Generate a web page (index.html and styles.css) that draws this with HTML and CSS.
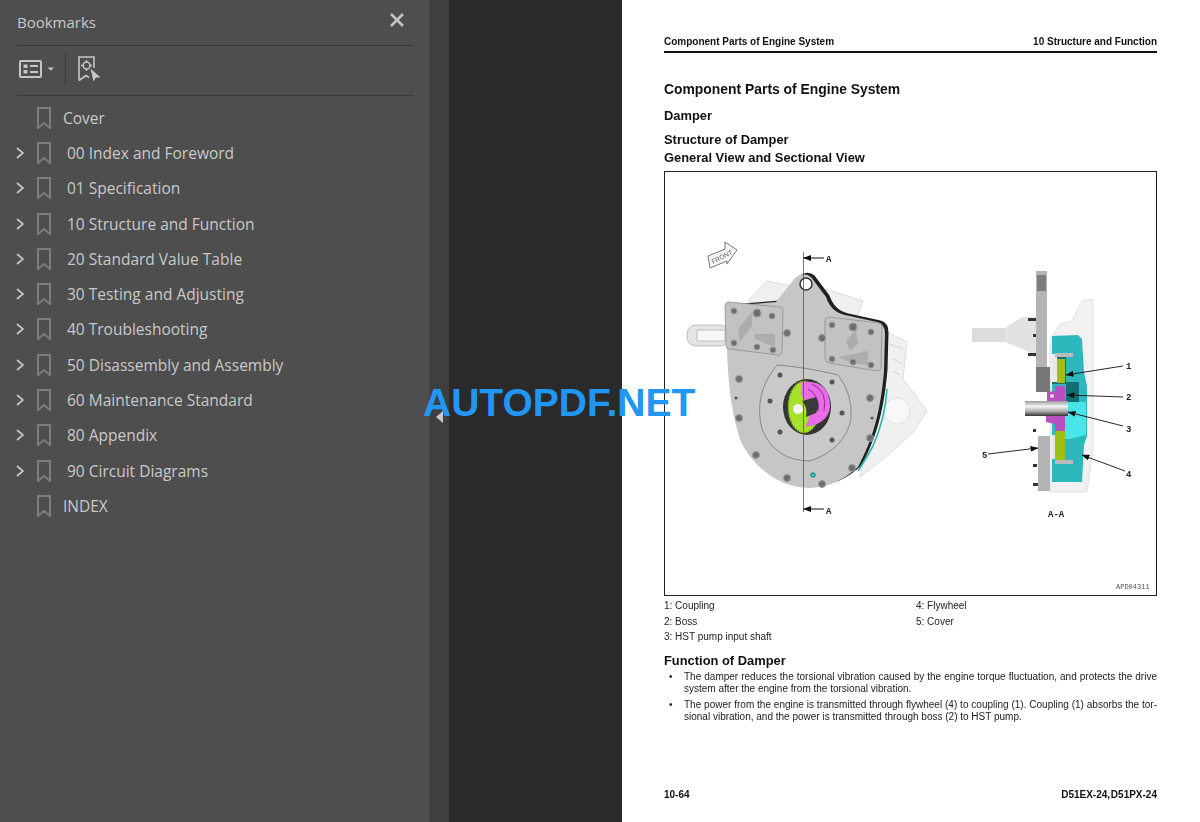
FILE: index.html
```html
<!DOCTYPE html>
<html lang="en">
<head>
  <meta charset="UTF-8" />
  <title>Bookmarks - D51EX-24, D51PX-24</title>
  <link rel="stylesheet" href="styles.css">
</head>
<body>

  <svg class="defs" width="0" height="0" aria-hidden="true">
    <symbol id="bm" viewBox="0 0 14 22">
      <path d="M1 1H13V21L7 16L1 21Z" fill="none" stroke="currentColor" stroke-width="2"/>
    </symbol>
    <symbol id="chev" viewBox="0 0 8 12">
      <path d="M1 1L7 6L1 11" fill="none" stroke="currentColor" stroke-width="1.8"/>
    </symbol>
    <marker id="tip" viewBox="0 0 8 6" refX="0.5" refY="3" markerWidth="8" markerHeight="6" markerUnits="userSpaceOnUse" orient="auto">
      <path d="M8 0L0 3L8 6Z" fill="#111"/>
    </marker>
    <linearGradient id="shaft" x1="0" y1="0" x2="0" y2="1">
      <stop offset="0" stop-color="#999"/>
      <stop offset=".35" stop-color="#f4f4f4"/>
      <stop offset=".7" stop-color="#aaa"/>
      <stop offset="1" stop-color="#333"/>
    </linearGradient>
  </svg>

  <aside class="sidebar">
    <div class="side-head">
      <span class="side-title">Bookmarks</span>
      <svg class="close" width="14" height="14" viewBox="0 0 14 14">
        <path d="M1 1L13 13M13 1L1 13" stroke="currentColor" stroke-width="2.6"/>
      </svg>
    </div>
    <div class="side-tools">
      <svg class="tool-list" width="36" height="18" viewBox="0 0 36 18">
        <rect x="1" y="1" width="21" height="16" rx="1" fill="none" stroke="currentColor" stroke-width="2"/>
        <rect x="4.500" y="4.500" width="4" height="3.500" fill="currentColor"/>
        <rect x="4.500" y="10" width="4" height="3.500" fill="currentColor"/>
        <path d="M11 6H19M11 12H19" stroke="currentColor" stroke-width="2"/>
        <path d="M28.500 7.500H35L31.750 10.500Z" fill="currentColor"/>
      </svg>
      <span class="tool-sep"></span>
      <svg class="tool-new" width="23" height="26" viewBox="0 0 23 26">
        <path d="M1 21V1H16V12M1 24.500L8 19.500L11 21.500" fill="none" stroke="currentColor" stroke-width="1.600"/>
        <path d="M1 21V24.500" stroke="currentColor" stroke-width="1.600"/>
        <circle cx="8.500" cy="9.500" r="3.400" fill="none" stroke="currentColor" stroke-width="1.500"/>
        <path d="M8.500 4V6M8.500 13V15M3 9.500H5M12 9.500H14" stroke="currentColor" stroke-width="1.300"/>
        <path d="M12.500 12.500L22.500 21.500H18L15.500 25.500Z" fill="currentColor"/>
      </svg>
    </div>
    <ul class="tree">
      <li class="row leaf"><span class="chev"></span><svg class="bm"><use href="#bm"/></svg><span class="label">Cover</span></li>
      <li class="row"><svg class="chev"><use href="#chev"/></svg><svg class="bm"><use href="#bm"/></svg><span class="label">00 Index and Foreword</span></li>
      <li class="row"><svg class="chev"><use href="#chev"/></svg><svg class="bm"><use href="#bm"/></svg><span class="label">01 Specification</span></li>
      <li class="row"><svg class="chev"><use href="#chev"/></svg><svg class="bm"><use href="#bm"/></svg><span class="label">10 Structure and Function</span></li>
      <li class="row"><svg class="chev"><use href="#chev"/></svg><svg class="bm"><use href="#bm"/></svg><span class="label">20 Standard Value Table</span></li>
      <li class="row"><svg class="chev"><use href="#chev"/></svg><svg class="bm"><use href="#bm"/></svg><span class="label">30 Testing and Adjusting</span></li>
      <li class="row"><svg class="chev"><use href="#chev"/></svg><svg class="bm"><use href="#bm"/></svg><span class="label">40 Troubleshooting</span></li>
      <li class="row"><svg class="chev"><use href="#chev"/></svg><svg class="bm"><use href="#bm"/></svg><span class="label">50 Disassembly and Assembly</span></li>
      <li class="row"><svg class="chev"><use href="#chev"/></svg><svg class="bm"><use href="#bm"/></svg><span class="label">60 Maintenance Standard</span></li>
      <li class="row"><svg class="chev"><use href="#chev"/></svg><svg class="bm"><use href="#bm"/></svg><span class="label">80 Appendix</span></li>
      <li class="row"><svg class="chev"><use href="#chev"/></svg><svg class="bm"><use href="#bm"/></svg><span class="label">90 Circuit Diagrams</span></li>
      <li class="row leaf"><span class="chev"></span><svg class="bm"><use href="#bm"/></svg><span class="label">INDEX</span></li>
    </ul>
  </aside>

  <div class="splitter"><span class="collapse"></span></div>
  <div class="gutter"></div>

  <main class="page">
    <header class="page-head">
      <span>Component Parts of Engine System</span>
      <span>10 Structure and Function</span>
    </header>
    <h1>Component Parts of Engine System</h1>
    <h2>Damper</h2>
    <h3>Structure of Damper</h3>
    <h3 class="sub">General View and Sectional View</h3>

    <figure class="figure">
      <!-- coordinates are page pixels, so the viewBox starts at the box corner -->
      <svg class="drawing" viewBox="665 173 491 423" width="491" height="423">
        <!-- ghost housing behind the plate -->
        <g fill="#f0f0f0" stroke="#dcdcdc">
          <path d="M748 302L767 282L793 287L800 300L770 310Z"/>
          <path d="M825 290L863 302L857 318L830 312Z"/>
          <path d="M880 330L907 343L903 380L927 412L913 433L887 457L860 478L870 400Z"/>
        </g>
        <path d="M890 345L903 350M893 360L903 365M893 372L900 376" stroke="#d0d0d0" fill="none"/>
        <circle cx="897" cy="412" r="13" fill="#f8f8f8" stroke="#dedede"/>
        <g fill="#e4e4e4" stroke="#bdbdbd">
          <rect x="687" y="326" width="42" height="21" rx="9"/>
          <rect x="697" y="331" width="28" height="11" fill="#f7f7f7"/>
        </g>

        <!-- plate, its dark edge is the same outline shifted -->
        <path transform="translate(3.500 -1.500)" d="M795 279Q804 272 811 278L826 298Q831 313 845 316L877 323Q885 325 885 335L884 372C880 420 870 445 858 468C845 480 830 488 810 489C780 489 755 470 741 443C733 420 728 390 727 350L727 307L776 303Z" fill="#202020"/>
        <path d="M795 279Q804 272 811 278L826 298Q831 313 845 316L877 323Q885 325 885 335L884 372C880 420 870 445 858 468C845 480 830 488 810 489C780 489 755 470 741 443C733 420 728 390 727 350L727 307L776 303Z" fill="#c6c6c6"/>
        <path d="M887 390Q885 420 873 447Q866 460 858 472" fill="none" stroke="#2ab6b6" stroke-width="1.600"/>

        <!-- translucent brackets -->
        <g fill="#c2c2c2" stroke="#8f8f8f" stroke-width=".8">
          <path d="M729 303L780 308Q783 308 783 312L782 352Q782 357 778 356L730 350Q726 350 726 346L725 307Q725 303 729 303Z"/>
          <path d="M829 318L879 324Q882 324 882 328L881 368Q881 372 877 372L829 364Q825 363 825 359L825 322Q825 318 829 318Z"/>
        </g>
        <path d="M738 330L752 313V327L740 343ZM755 335H775V348L755 340ZM846 342L856 330L858 345L850 352ZM838 358L868 352V366L852 364Z" fill="#adadad"/>
        <circle cx="806" cy="285" r="6" fill="#fff" stroke="#333" stroke-width="1.500"/>

        <!-- bolts -->
        <g fill="#6e6e6e" stroke="#9a9a9a" stroke-width="1">
          <circle cx="734" cy="312" r="3"/><circle cx="757" cy="314" r="4"/><circle cx="772" cy="317" r="3"/>
          <circle cx="734" cy="344" r="3"/><circle cx="757" cy="348" r="3"/><circle cx="773" cy="351" r="3"/>
          <circle cx="787" cy="334" r="3.500"/><circle cx="832" cy="326" r="3"/><circle cx="853" cy="328" r="4"/>
          <circle cx="871" cy="333" r="3"/><circle cx="832" cy="360" r="3"/><circle cx="853" cy="363" r="3"/>
          <circle cx="871" cy="366" r="3"/><circle cx="822" cy="339" r="3.500"/>
          <circle cx="739" cy="380" r="3.500"/><circle cx="739" cy="419" r="3.500"/><circle cx="756" cy="456" r="3.500"/>
          <circle cx="787" cy="479" r="3.500"/><circle cx="822" cy="485" r="3.500"/><circle cx="852" cy="469" r="3.500"/>
          <circle cx="870" cy="439" r="3.500"/><circle cx="870" cy="399" r="3.500"/>
        </g>

        <!-- flywheel ring and damper hub -->
        <path d="M777 366Q805 368 838 376Q853 395 851 420Q845 450 810 462Q775 462 762 430Q753 395 777 366Z" fill="#c9c9c9" stroke="#6d6d6d" stroke-width=".7"/>
        <g fill="#555">
          <circle cx="736" cy="399" r="1.500"/><circle cx="872" cy="419" r="1.500"/>
          <circle cx="780" cy="376" r="2.500"/><circle cx="832" cy="383" r="2.500"/><circle cx="770" cy="402" r="2.500"/>
          <circle cx="842" cy="414" r="2.500"/><circle cx="780" cy="433" r="2.500"/><circle cx="832" cy="441" r="2.500"/>
        </g>
        <circle cx="813" cy="476" r="2.200" fill="#3cc" stroke="#177"/>
        <ellipse cx="807" cy="408" rx="24" ry="28" fill="#333"/>
        <ellipse cx="804" cy="408" rx="16" ry="26" fill="#a6e22a"/>
        <ellipse cx="804" cy="408" rx="16" ry="26" fill="none" stroke="#4c7a10" stroke-dasharray="1 2" stroke-width="2"/>
        <path d="M802 383Q830 380 830 408Q828 425 805 428Q815 412 801 396Z" fill="#e86ce8"/>
        <path d="M812 385Q828 392 824 412M808 390Q820 396 818 412" stroke="#8d2f8d" fill="none"/>
        <path d="M802 402L816 398Q821 407 816 414L806 418Q808 408 802 402Z" fill="#3b3b3b"/>
        <circle cx="798" cy="410" r="5" fill="#f6f6f6"/>

        <!-- section line A -->
        <path d="M803.500 253V513" stroke="#555" stroke-width=".8"/>
        <path d="M803.500 259H824" stroke="#111" marker-start="url(#tip)"/>
        <path d="M803.500 510H824" stroke="#111" marker-start="url(#tip)"/>
        <text class="mark" x="826" y="263">A</text>
        <text class="mark" x="826" y="515">A</text>

        <!-- FRONT sign -->
        <path d="M708 257L725 250L725 243L737 251L727 265L727 262L710 269Z" fill="#f5f5f5" stroke="#777"/>
        <text class="front" transform="translate(713 265) rotate(-27)">FRONT</text>

        <!-- section view -->
        <path d="M1050 340L1060 325L1072 322L1082 302L1093 300L1093 450L1087 493H1050Z" fill="#f1f1f1" stroke="#e2e2e2"/>
        <path d="M1005 329L1022 318H1036V357L1023 350L1005 343Z" fill="#e2e2e2"/>
        <rect x="972" y="329" width="33" height="14" fill="#dcdcdc"/>
        <path d="M1052 337L1078 336L1082 340L1084 373L1087 387V437L1084 446L1082 483H1052Z" fill="#2cb8bc"/>
        <rect x="1052" y="355" width="14" height="30" fill="#146f73"/>
        <rect x="1052" y="355" width="5" height="28" fill="#e8e8e8"/>
        <rect x="1057" y="360" width="8" height="24" fill="#9fc012"/>
        <rect x="1066" y="383" width="13" height="20" fill="#0f6f72"/>
        <path d="M1065 403H1086V436L1070 440H1065Z" fill="#48e6e8"/>
        <rect x="1052" y="436" width="4" height="24" fill="#e6e6e6"/>
        <rect x="1055" y="432" width="10" height="31" fill="#9fc012"/>
        <rect x="1055" y="354" width="18" height="4" fill="#bbb"/>
        <rect x="1055" y="461" width="18" height="4" fill="#bbb"/>
        <path d="M1036 272H1047V383H1036Z" fill="#b4b4b4"/>
        <rect x="1037" y="276" width="9" height="16" fill="#7d7d7d"/>
        <path d="M1036 368H1050V393H1036Z" fill="#777"/>
        <path d="M1038 437H1050V492H1038Z" fill="#b4b4b4"/>
        <path d="M1047 393L1055 392V387H1065V432H1055V425L1046 423V415L1047 405Z" fill="#b94fc0"/>
        <circle cx="1052" cy="397" r="2" fill="#ddd"/>
        <rect x="1025" y="402" width="43" height="15" fill="url(#shaft)"/>
        <g fill="#333">
          <rect x="1028" y="319" width="8" height="3"/><rect x="1033" y="335" width="3" height="3"/>
          <rect x="1028" y="354" width="8" height="3"/><rect x="1033" y="430" width="3" height="3"/>
          <rect x="1033" y="465" width="4" height="3"/><rect x="1033" y="484" width="5" height="3"/>
        </g>
        <g stroke="#111" stroke-width=".9">
          <path d="M1066 376L1123 367" marker-start="url(#tip)"/>
          <path d="M1067 396L1123 398" marker-start="url(#tip)"/>
          <path d="M1068 413L1123 427" marker-start="url(#tip)"/>
          <path d="M1082 456L1125 472" marker-start="url(#tip)"/>
          <path d="M1038 449L988 455" marker-start="url(#tip)"/>
        </g>
        <text class="mark" x="1126" y="370">1</text>
        <text class="mark" x="1126" y="401">2</text>
        <text class="mark" x="1126" y="433">3</text>
        <text class="mark" x="1126" y="478">4</text>
        <text class="mark" x="982" y="459">5</text>
        <text class="mark" x="1048" y="518">A-A</text>
        <text class="code" x="1116" y="590">APD04311</text>
      </svg>
    </figure>

    <div class="legend">
      <span>1: Coupling</span><span>4: Flywheel</span>
      <span>2: Boss</span><span>5: Cover</span>
      <span>3: HST pump input shaft</span>
    </div>

    <h4>Function of Damper</h4>
    <ul class="notes">
      <li>
        <span class="line">The damper reduces the torsional vibration caused by the engine torque fluctuation, and protects the drive</span>
        <span>system after the engine from the torsional vibration.</span>
      </li>
      <li>
        <span class="line">The power from the engine is transmitted through flywheel (4) to coupling (1). Coupling (1) absorbs the tor-</span>
        <span>sional vibration, and the power is transmitted through boss (2) to HST pump.</span>
      </li>
    </ul>

    <footer class="page-foot">
      <span>10-64</span>
      <span class="models">D51EX-24, D51PX-24</span>
    </footer>
  </main>

  <div class="watermark">AUTOPDF.NET</div>

</body>
</html>
```

FILE: styles.css
```css
* {
  box-sizing: border-box;
}

html, body {
  height: 822px;
  overflow: hidden;
}

body {
  margin: 0;
  display: flex;
  background: #2a2a2a;
  font-family: "Liberation Sans", Arial, sans-serif;
}

.defs {
  position: absolute;
}

/* side panel */
.sidebar {
  width: 429px;
  flex: none;
  background: #4e4e4e;
  color: #c9c9c9;
  font-family: "Open Sans", "Noto Sans", sans-serif;
}

.side-head {
  height: 46px;
  margin: 0 15px 0 17px;
  padding: 0 10px 2px 0;
  display: flex;
  align-items: center;
  justify-content: space-between;
  border-bottom: 1px solid #393939;
}

.side-title {
  font-size: 15px;
}

.close {
  margin-bottom: 3px;
  color: #c4c4c4;
}

.side-tools {
  height: 50px;
  margin: 0 15px 0 17px;
  padding: 0 0 3px 2px;
  display: flex;
  align-items: center;
  border-bottom: 1px solid #393939;
  color: #c6c6c6;
}

.tool-list {
  margin-right: 10px;
}

.tool-sep {
  width: 1px;
  height: 32px;
  background: #3b3b3b;
  margin-right: 12px;
}

.tree {
  list-style: none;
  margin: 4px 0 0;
  padding: 0;
}

.row {
  height: 35.3px;
  display: flex;
  align-items: center;
  font-size: 15.5px;
}

.chev {
  width: 8px;
  height: 12px;
  margin: 0 13px 0 16px;
  color: #c4c4c4;
}

.bm {
  width: 14px;
  height: 22px;
  color: #7d7d7d;
}

.label {
  margin-left: 16px;
  white-space: nowrap;
}

.leaf .label {
  margin-left: 12px;
}

/* splitter and empty viewer area */
.splitter {
  width: 20px;
  flex: none;
  background: #3f3f3f;
  display: flex;
  align-items: center;
  justify-content: center;
  padding-top: 12px;
}

.collapse {
  border-style: solid;
  border-width: 6px 7px 6px 0;
  border-color: transparent #c8c8c8 transparent transparent;
}

.gutter {
  width: 173px;
  flex: none;
  background: #2a2a2a;
}

/* the pdf page */
.page {
  width: 578px;
  flex: none;
  background: #fff;
  color: #111;
  padding: 36px 43px 0 42px;
  display: flex;
  flex-direction: column;
  filter: blur(.3px);
}

.page-head {
  display: flex;
  justify-content: space-between;
  font-size: 10px;
  font-weight: bold;
  line-height: 12px;
  padding-bottom: 3px;
  border-bottom: 2px solid #111;
}

h1, h2, h3, h4 {
  margin: 0;
  font-weight: bold;
  font-size: 12.9px;
  line-height: 16px;
}

h1 {
  font-size: 13.9px;
  margin-top: 28px;
}

h2 {
  margin-top: 11px;
}

h3 {
  margin-top: 8px;
}

h3.sub {
  margin-top: 2px;
}

.figure {
  margin: 5px 0 0;
  width: 493px;
  height: 425px;
  border: 1px solid #222;
  flex: none;
}

.drawing {
  display: block;
}

.mark {
  font-size: 9px;
  font-weight: bold;
  fill: #222;
  font-family: "Liberation Mono", monospace;
}

.front {
  font-size: 6.5px;
  fill: #666;
}

.code {
  font-size: 7px;
  fill: #555;
  font-family: "Liberation Mono", monospace;
}

.legend {
  display: grid;
  grid-template-columns: 252px 1fr;
  font-size: 10px;
  line-height: 15.5px;
  margin-top: 2px;
  color: #222;
}

h4 {
  margin-top: 8px;
}

.notes {
  list-style: none;
  margin: 2px 0 0;
  padding: 0 0 0 20px;
  font-size: 10px;
  line-height: 12px;
  color: #222;
}

.notes li {
  position: relative;
  margin-bottom: 4px;
}

.notes li::before {
  content: "•";
  position: absolute;
  left: -15px;
}

.notes span {
  display: block;
  white-space: nowrap;
}

.notes .line {
  white-space: normal;
  text-align: justify;
  text-align-last: justify;
}

.page-foot {
  margin-top: auto;
  margin-bottom: 21px;
  display: flex;
  justify-content: space-between;
  font-size: 10px;
  font-weight: bold;
  line-height: 12px;
}

.models {
  word-spacing: -2px;
}

/* site stamp over everything */
.watermark {
  position: absolute;
  left: 423px;
  top: 381px;
  font-size: 39px;
  font-weight: bold;
  line-height: 44px;
  color: #2196f3;
  white-space: nowrap;
}
```
